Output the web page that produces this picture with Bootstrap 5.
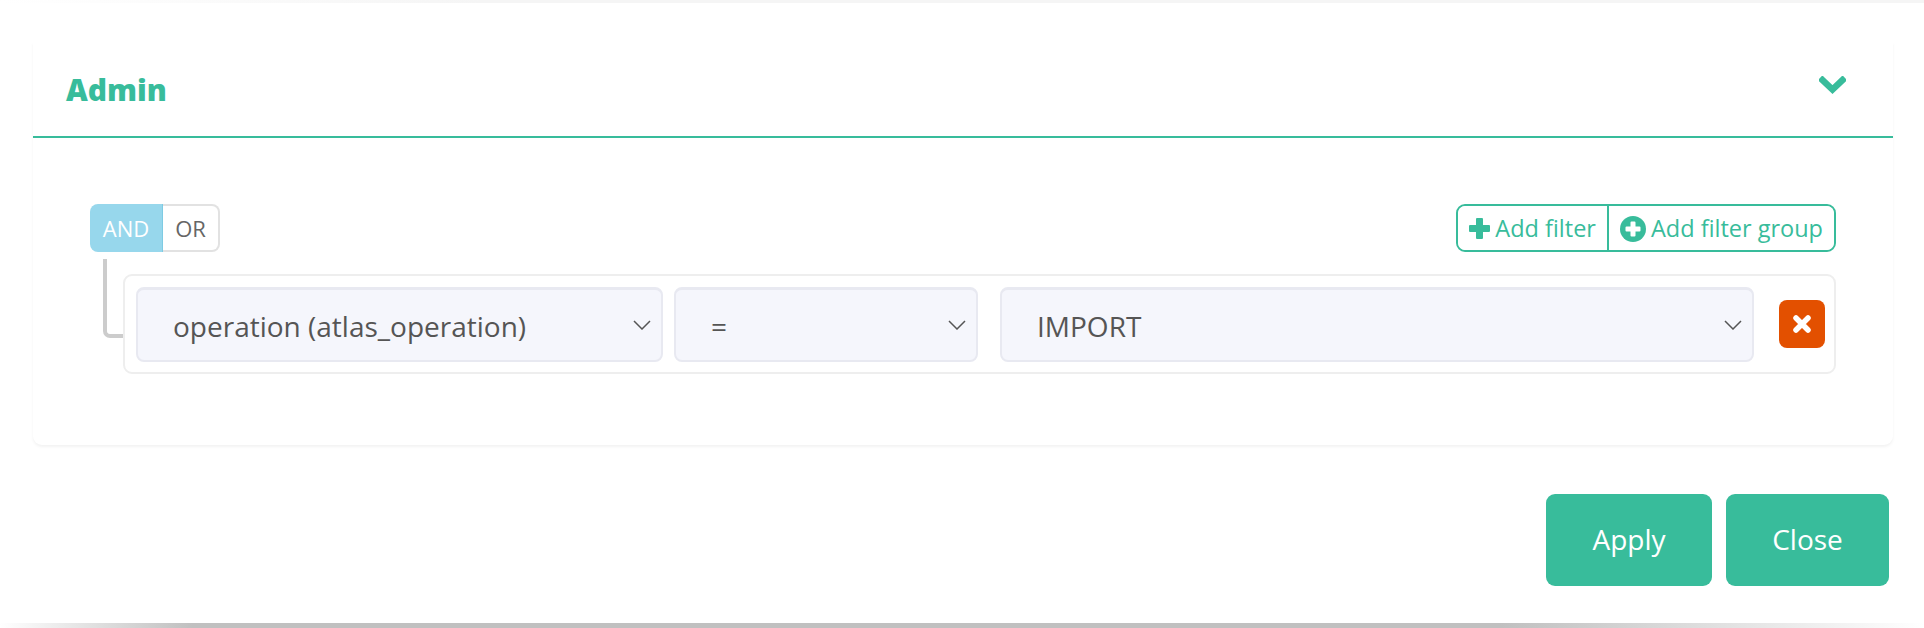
<!DOCTYPE html>
<html lang="en">
<head>
  <meta charset="UTF-8" />
  <title>Filters</title>
  <link href="https://cdn.jsdelivr.net/npm/bootstrap@5.3.3/dist/css/bootstrap.min.css" rel="stylesheet" />
  <style>
    html, body {
      height: 628px;
      overflow: hidden;
    }
    body {
      background: #fff;
      font-family: "Open Sans", "Noto Sans", sans-serif;
      color: #555;
    }
    .top-strip {
      height: 3px;
      background: linear-gradient(90deg, #fff 0, #f5f5f5 25%, #f5f5f5 100%);
    }
    .bottom-strip {
      height: 5px;
      margin-top: 37px;
      background: linear-gradient(90deg, #fff 0, #c0c0c0 10%, #c0c0c0 78%, #fff 100%);
    }
    .filter-card {
      margin: 39px 31px 0 33px;
      height: 403px;
      border: 0;
      border-radius: 0 0 9px 9px;
      box-shadow: 0 2px 3px rgba(0, 0, 0, .05);
    }
    .filter-card .card-header {
      height: 96px;
      padding: 0 47px 0 33px;
      background: #fff;
      border-bottom: 2px solid #38bc9b;
      border-radius: 0;
    }
    .filter-title {
      font-size: 30px;
      font-weight: 800;
      color: #38bc9b;
      margin: 2px 0 0;
    }
    .chevron-toggle {
      margin-top: -8px;
    }
    .filter-card .card-body {
      padding: 66px 57px 0 57px;
    }
    .mode-group .btn {
      height: 48px;
      font-size: 22px;
      line-height: 1;
      padding: 0;
      --bs-btn-border-radius: 8px;
    }
    .btn-and {
      width: 74px;
      color: #fff;
      background: #97d7ec;
      border: 0;
      border-right: 2px solid #7ecbe3;
    }
    .btn-or {
      width: 57px;
      color: #666;
      background: #fff;
      border: 2px solid #e2e2e2;
      border-left: 0;
    }
    .add-group {
      border: 2px solid #38bc9b;
      border-radius: 9px;
      height: 48px;
    }
    .add-group .btn {
      color: #38bc9b;
      background: #fff;
      font-size: 23.5px;
      line-height: 1;
      padding: 1px 11px 0;
      border: 0;
      border-radius: 8px;
      display: flex;
      align-items: center;
      gap: 5px;
    }
    .add-group .btn + .btn {
      border-left: 2px solid #38bc9b;
      border-radius: 0 8px 8px 0;
    }
    .rule-link {
      width: 20px;
      height: 79px;
      margin: 7px 0 0 13px;
      flex: none;
      border-left: 4px solid #ccc;
      border-bottom: 4px solid #ccc;
      border-bottom-left-radius: 7px;
    }
    .rule-row {
      height: 100px;
      margin-top: 22px;
      padding: 0 9px 0 11px;
      border: 2px solid #eee;
      border-radius: 9px;
    }
    .rule-row .form-select {
      height: 75px;
      flex: none;
      font-family: inherit;
      font-size: 28px;
      color: #555;
      background-color: #f5f6fc;
      border: 2px solid #e8e9f1;
      border-top-width: 3px;
      border-radius: 8px;
      padding: 2px 40px 0 35px;
      background-image: url("data:image/svg+xml,%3csvg xmlns='http://www.w3.org/2000/svg' viewBox='0 0 18 10'%3e%3cpath fill='none' stroke='%23555' stroke-width='1.5' d='M1 1l8 8 8-8'/%3e%3c/svg%3e");
      background-position: right 10px center;
      background-size: 18px 10px;
    }
    .sel-field { width: 527px; }
    .sel-op { width: 304px; margin-left: 11px; }
    .sel-value { width: 754px; margin-left: 22px; }
    .btn-remove {
      width: 46px;
      height: 48px;
      padding: 0;
      margin-left: 25px;
      background: #e35000;
      border: 0;
      border-radius: 8px;
    }
    .footer-btn {
      height: 92px;
      padding-bottom: 8px;
      font-size: 28px;
      color: #fff;
      background: #38bc9b;
      border: 0;
      border-radius: 9px;
    }
    .apply-btn { width: 166px; }
    .close-btn { width: 163px; }
    .modal-actions {
      margin: 49px 35px 0 0;
      gap: 14px;
    }
  </style>
</head>
<body>
  <div class="top-strip"></div>

  <div class="card filter-card">
    <div class="card-header d-flex justify-content-between align-items-center">
      <h2 class="filter-title">Admin</h2>
      <svg class="chevron-toggle" width="27" height="18" viewBox="0 0 27 18"><path fill="none" stroke="#38bc9b" stroke-width="6.500" stroke-linecap="square" d="M3.5 4l10 9.500 10-9.500"/></svg>
    </div>
    <div class="card-body">
      <div class="d-flex justify-content-between align-items-start">
        <div class="btn-group mode-group">
          <button type="button" class="btn btn-and">AND</button>
          <button type="button" class="btn btn-or">OR</button>
        </div>
        <div class="add-group d-flex">
          <button type="button" class="btn">
            <svg width="21" height="21" viewBox="0 0 21 21"><path fill="#38bc9b" d="M7 1a1 1 0 0 1 1-1h5a1 1 0 0 1 1 1v6h6a1 1 0 0 1 1 1v5a1 1 0 0 1-1 1h-6v6a1 1 0 0 1-1 1H8a1 1 0 0 1-1-1v-6H1a1 1 0 0 1-1-1V8a1 1 0 0 1 1-1h6z"/></svg>
            Add filter
          </button>
          <button type="button" class="btn">
            <svg width="26" height="26" viewBox="0 0 26 26"><circle cx="13" cy="13" r="13" fill="#38bc9b"/><path fill="#fff" d="M10.500 6.500a1 1 0 0 1 1-1h3a1 1 0 0 1 1 1v4h4a1 1 0 0 1 1 1v3a1 1 0 0 1-1 1h-4v4a1 1 0 0 1-1 1h-3a1 1 0 0 1-1-1v-4h-4a1 1 0 0 1-1-1v-3a1 1 0 0 1 1-1h4z"/></svg>
            Add filter group
          </button>
        </div>
      </div>
      <div class="d-flex align-items-start">
        <div class="rule-link"></div>
        <div class="rule-row d-flex align-items-center flex-grow-1">
          <select class="form-select sel-field"><option>operation (atlas_operation)</option></select>
          <select class="form-select sel-op"><option>=</option></select>
          <select class="form-select sel-value"><option>IMPORT</option></select>
          <button type="button" class="btn btn-remove d-flex align-items-center justify-content-center">
            <svg width="18" height="18" viewBox="0 0 18 18"><path fill="none" stroke="#fff" stroke-width="5.500" stroke-linecap="round" d="M3 3l12 12M15 3L3 15"/></svg>
          </button>
        </div>
      </div>
    </div>
  </div>

  <div class="modal-actions d-flex justify-content-end">
    <button type="button" class="btn footer-btn apply-btn">Apply</button>
    <button type="button" class="btn footer-btn close-btn">Close</button>
  </div>
  <div class="bottom-strip"></div>
</body>
</html>
